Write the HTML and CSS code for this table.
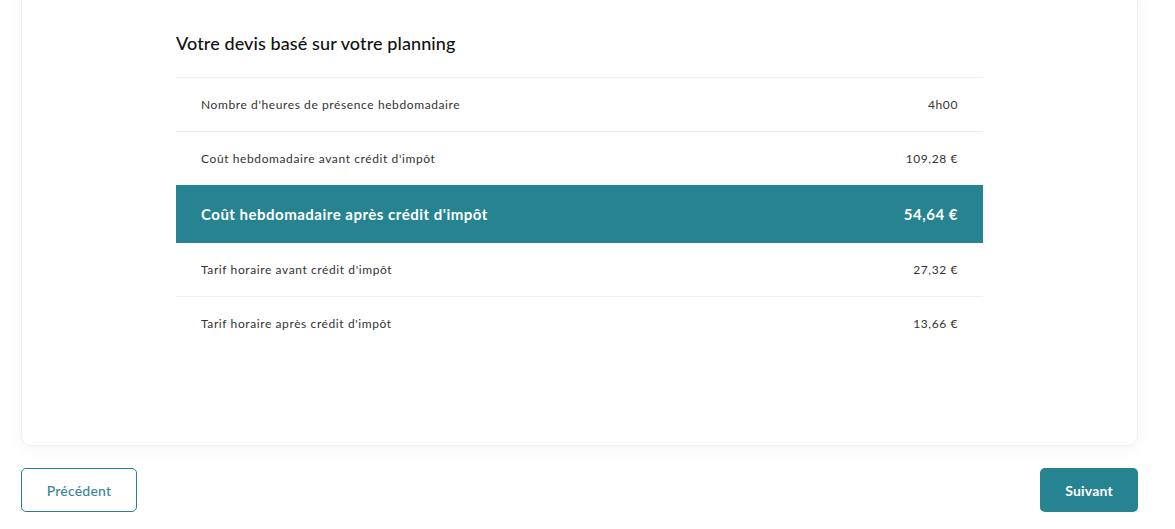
FILE: index.html
```html
<!DOCTYPE html>
<html lang="fr">
<head>
<meta charset="utf-8">
<link rel="stylesheet" href="styles.css">
</head>
<body>
<div class="page">
  <div class="card">
    <div class="quote">
      <h2 class="title">Votre devis basé sur votre planning</h2>
      <div class="rows">
        <div class="row"><span>Nombre d'heures de présence hebdomadaire</span><span>4h00</span></div>
        <div class="row"><span>Coût hebdomadaire avant crédit d'impôt</span><span>109,28 €</span></div>
        <div class="row highlight"><span>Coût hebdomadaire après crédit d'impôt</span><span>54,64 €</span></div>
        <div class="row"><span>Tarif horaire avant crédit d'impôt</span><span>27,32 €</span></div>
        <div class="row last"><span>Tarif horaire après crédit d'impôt</span><span>13,66 €</span></div>
      </div>
    </div>
  </div>
  <div class="actions">
    <button class="btn btn-outline">Précédent</button>
    <button class="btn btn-primary">Suivant</button>
  </div>
</div>
</body>
</html>
```

FILE: styles.css
```css
html, body {
  margin: 0;
  padding: 0;
  background: #ffffff;
  font-family: "Lato", "Noto Sans", sans-serif;
  color: #222;
}
.page {
  padding: 0 37px 0 21px;
  overflow: hidden;
  height: 529px;
  box-sizing: border-box;
}
.card {
  margin-top: -20px;
  background: #fff;
  border: 1px solid #eeeeee;
  border-radius: 10px;
  box-shadow: 0 4px 18px rgba(0, 0, 0, 0.04);
  padding: 51px 154px 95px 154px;
}
.quote {
  max-width: 807px;
}
.title {
  margin: 0;
  font-size: 18px;
  font-weight: 500;
  color: #111;
  height: 45px;
  line-height: 22px;
  letter-spacing: 0.1px;
  border-bottom: 1px solid #eeeeee;
}
.row {
  display: flex;
  justify-content: space-between;
  align-items: center;
  height: 53px;
  padding: 0 25px;
  font-size: 12px;
  letter-spacing: 0.6px;
  color: #333;
  border-bottom: 1px solid #eeeeee;
}
.row.last {
  border-bottom: none;
}
.row.highlight {
  background: #268390;
  color: #fff;
  font-weight: 700;
  font-size: 15px;
  letter-spacing: 0.5px;
  height: 58px;
  border-bottom: none;
  margin-top: -1px;
}
.actions {
  display: flex;
  justify-content: space-between;
  margin-top: 22px;
}
.btn {
  font-family: "Lato", "Noto Sans", sans-serif;
  font-size: 14px;
  height: 44px;
  border-radius: 5px;
  cursor: pointer;
  letter-spacing: 0.2px;
}
.btn-outline {
  width: 116px;
  background: #fff;
  border: 1px solid #268390;
  color: #3a8796;
  font-weight: 500;
}
.btn-primary {
  width: 98px;
  background: #268390;
  border: none;
  color: #fff;
  font-weight: 700;
}
```
